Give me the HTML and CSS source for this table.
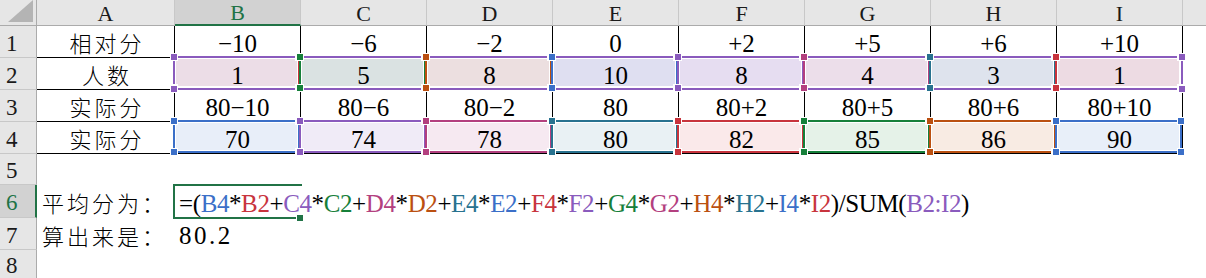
FILE: index.html
```html
<!DOCTYPE html>
<html lang="zh">
<head>
<meta charset="utf-8">
<title>Sheet</title>
<link rel="stylesheet" href="styles.css">
</head>
<body>
<div class="sheet">
  <div class="row hdr">
    <div class="corner"><svg width="36" height="25" viewBox="0 0 36 25"><polygon points="8,22 33,22 33,0" fill="#b4b4b4"/></svg></div>
    <div class="ch">A</div>
    <div class="ch sel">B</div>
    <div class="ch">C</div>
    <div class="ch">D</div>
    <div class="ch">E</div>
    <div class="ch">F</div>
    <div class="ch">G</div>
    <div class="ch">H</div>
    <div class="ch">I</div>
    <div class="ch last"></div>
  </div>

  <div class="row r32 tbl">
    <div class="rh">1</div>
    <div class="c cjk">相对分</div>
    <div class="c num">−10</div>
    <div class="c num">−6</div>
    <div class="c num">−2</div>
    <div class="c num">0</div>
    <div class="c num">+2</div>
    <div class="c num">+5</div>
    <div class="c num">+6</div>
    <div class="c num">+10</div>
    <div class="c j"></div>
  </div>

  <div class="row r32 tbl r2">
    <div class="rh">2</div>
    <div class="c cjk">人数</div>
    <div class="c num box">1</div>
    <div class="c num box">5</div>
    <div class="c num box">8</div>
    <div class="c num box">10</div>
    <div class="c num box">8</div>
    <div class="c num box">4</div>
    <div class="c num box">3</div>
    <div class="c num box">1</div>
    <div class="c j"></div>
    <div class="range box"></div>
  </div>

  <div class="row r32 tbl">
    <div class="rh">3</div>
    <div class="c cjk">实际分</div>
    <div class="c num">80−10</div>
    <div class="c num">80−6</div>
    <div class="c num">80−2</div>
    <div class="c num">80</div>
    <div class="c num">80+2</div>
    <div class="c num">80+5</div>
    <div class="c num">80+6</div>
    <div class="c num">80+10</div>
    <div class="c j"></div>
  </div>

  <div class="row r32 tbl r4">
    <div class="rh">4</div>
    <div class="c cjk">实际分</div>
    <div class="c num box">70</div>
    <div class="c num box">74</div>
    <div class="c num box">78</div>
    <div class="c num box">80</div>
    <div class="c num box">82</div>
    <div class="c num box">85</div>
    <div class="c num box">86</div>
    <div class="c num box">90</div>
    <div class="c j"></div>
  </div>

  <div class="row r5">
    <div class="rh">5</div>
  </div>

  <div class="row r6">
    <div class="rh sel">6</div>
    <div class="c cjk left">平均分为：</div>
    <div class="c active formula"><span>=(</span><span class="t-blue">B4</span>*<span class="t-red">B2</span>+<span class="t-purple">C4</span>*<span class="t-green">C2</span>+<span class="t-mag">D4</span>*<span class="t-orange">D2</span>+<span class="t-teal">E4</span>*<span class="t-blue">E2</span>+<span class="t-red">F4</span>*<span class="t-purple">F2</span>+<span class="t-green">G4</span>*<span class="t-mag">G2</span>+<span class="t-orange">H4</span>*<span class="t-teal">H2</span>+<span class="t-blue">I4</span>*<span class="t-red">I2</span>)/SUM(<span class="t-purple">B2:I2</span>)</div>
  </div>

  <div class="row r32">
    <div class="rh">7</div>
    <div class="c cjk left">算出来是：</div>
    <div class="c val">80.2</div>
  </div>

  <div class="row r8">
    <div class="rh">8</div>
  </div>
</div>
</body>
</html>
```

FILE: styles.css
```css
:root {
  --blue: #3b6fc8;
  --red: #c8343d;
  --purple: #8a5bbd;
  --green: #16803a;
  --mag: #b3407f;
  --orange: #bb5011;
  --teal: #28728f;
  --xlgreen: #217346;
}

* { box-sizing: border-box; }

body {
  margin: 0;
  background: #fff;
  color: #000;
  font-family: "Liberation Serif", "Times New Roman", serif;
}

.sheet {
  width: 1206px;
  height: 278px;
  overflow: hidden;
}

.row {
  display: grid;
  grid-template-columns: 37px 138px repeat(8, 126px) 1fr;
  position: relative;
}

.hdr { height: 26px; }
.r32 { height: 32px; }
.r5 { height: 31px; }
.r6 { height: 33px; }
.r8 { height: 29px; }

.corner {
  background: #e6e6e6;
  border-right: 1px solid #ababab;
  border-bottom: 1px solid #ababab;
}
.corner svg { display: block; }

.ch {
  background: #e6e6e6;
  border-right: 1px solid #c8c8c8;
  border-bottom: 1px solid #ababab;
  display: flex;
  align-items: center;
  justify-content: center;
  font-size: 22px;
  line-height: 22px;
  padding-top: 2px;
  color: #1a1a1a;
}
.ch.sel {
  background: #d2d2d2;
  color: var(--xlgreen);
  border-bottom: 2px solid var(--xlgreen);
}
.ch.last { border-right: none; }

.rh {
  background: #e6e6e6;
  border-right: 1px solid #ababab;
  border-bottom: 1px solid #c8c8c8;
  display: flex;
  align-items: center;
  padding-left: 6px;
  padding-top: 4px;
  font-size: 23px;
  line-height: 24px;
  color: #1a1a1a;
}
.rh.sel {
  background: #d2d2d2;
  color: var(--xlgreen);
  border-right: 2px solid var(--xlgreen);
}

.c {
  display: flex;
  align-items: center;
  justify-content: center;
  position: relative;
  white-space: nowrap;
  font-size: 25px;
  line-height: 26px;
}
.tbl .c {
  border-right: 1px solid #000;
  border-bottom: 1px solid #000;
}
.tbl .c.j { border: none; }

.num { padding-top: 4px; }
.cjk {
  font-family: "Noto Sans CJK SC", sans-serif;
  font-weight: 300;
  font-size: 22px;
  line-height: 24px;
  letter-spacing: 3px;
  padding-top: 1px;
}
.tbl .cjk { padding-left: 3px; }
.left {
  justify-content: flex-start;
  padding-left: 5px;
}

/* formula range highlight boxes */
.box::before {
  content: "";
  position: absolute;
  top: -2px;
  left: -2px;
  right: 0;
  bottom: 0;
  border: 2px solid var(--c);
  box-shadow: inset 0 0 0 1px #fff;
  z-index: 1;
  pointer-events: none;
}
.box::after {
  content: "";
  position: absolute;
  top: -5px;
  left: -5px;
  right: -3px;
  bottom: -3px;
  z-index: 3;
  pointer-events: none;
  background:
    linear-gradient(var(--c), var(--c)) left 1px top 1px / 6px 6px no-repeat,
    linear-gradient(var(--c), var(--c)) right 1px top 1px / 6px 6px no-repeat,
    linear-gradient(var(--c), var(--c)) left 1px bottom 1px / 6px 6px no-repeat,
    linear-gradient(var(--c), var(--c)) right 1px bottom 1px / 6px 6px no-repeat,
    linear-gradient(#fff, #fff) left top / 8px 8px no-repeat,
    linear-gradient(#fff, #fff) right top / 8px 8px no-repeat,
    linear-gradient(#fff, #fff) left bottom / 8px 8px no-repeat,
    linear-gradient(#fff, #fff) right bottom / 8px 8px no-repeat;
}

.range {
  position: absolute;
  left: 175px;
  top: 0;
  width: 1008px;
  height: 32px;
  --c: var(--purple);
}
.range::before { z-index: 2; }
.range::after { z-index: 4; }

/* row 2 references */
.r2 .c:nth-child(3)  { --c: var(--red);    background: #ecdde7; }
.r2 .c:nth-child(4)  { --c: var(--green);  background: #dae2e2; }
.r2 .c:nth-child(5)  { --c: var(--orange); background: #ecdfe0; }
.r2 .c:nth-child(6)  { --c: var(--blue);   background: #dfdff1; }
.r2 .c:nth-child(7)  { --c: var(--purple); background: #e6ddf1; }
.r2 .c:nth-child(8)  { --c: var(--mag);    background: #ecdeea; }
.r2 .c:nth-child(9)  { --c: var(--teal);   background: #dee3ed; }
.r2 .c:nth-child(10) { --c: var(--red);    background: #eddbe3; }

/* row 4 references */
.r4 .c:nth-child(3)  { --c: var(--blue);   background: #e8eef9; }
.r4 .c:nth-child(4)  { --c: var(--purple); background: #f0ebf7; }
.r4 .c:nth-child(5)  { --c: var(--mag);    background: #f6e9f1; }
.r4 .c:nth-child(6)  { --c: var(--teal);   background: #e9f1f4; }
.r4 .c:nth-child(7)  { --c: var(--red);    background: #fae9ea; }
.r4 .c:nth-child(8)  { --c: var(--green);  background: #e5f2e8; }
.r4 .c:nth-child(9)  { --c: var(--orange); background: #f8ebe3; }
.r4 .c:nth-child(10) { --c: var(--blue);   background: #e8eff9; }

/* active cell with formula */
.active {
  justify-content: flex-start;
}
.active::before {
  content: "";
  position: absolute;
  top: -1px;
  left: -2px;
  right: -1px;
  bottom: -1px;
  border: 2px solid var(--xlgreen);
  border-right: none;
  z-index: 1;
  pointer-events: none;
}
.active::after {
  content: "";
  position: absolute;
  right: -2px;
  bottom: -3px;
  width: 6px;
  height: 6px;
  background: var(--xlgreen);
  border-left: 1px solid #fff;
  border-top: 1px solid #fff;
  z-index: 2;
}
.formula {
  padding-left: 4px;
  padding-top: 4px;
  letter-spacing: -0.4px;
}
.val {
  justify-content: flex-start;
  padding-left: 4px;
  padding-top: 4px;
  letter-spacing: 2.5px;
}

.t-blue { color: var(--blue); }
.t-red { color: var(--red); }
.t-purple { color: var(--purple); }
.t-green { color: var(--green); }
.t-mag { color: var(--mag); }
.t-orange { color: var(--orange); }
.t-teal { color: var(--teal); }
```
